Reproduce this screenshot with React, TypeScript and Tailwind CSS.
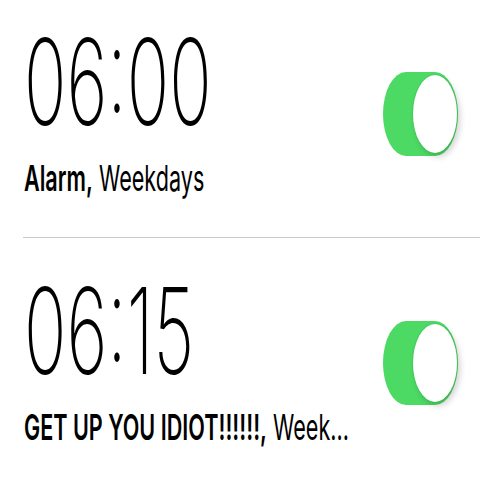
import React from "react"

type alarm = {
    time: string,
    label: string,
    repeat: string,
}

const alarms: alarm[] = [
    { time: "06:00", label: "Alarm,", repeat: "Weekdays" },
    { time: "06:15", label: "GET UP YOU IDIOT!!!!!!,", repeat: "Week..." },
]

function Toggle() {
    return <div className="relative w-[75px] h-[84px] mt-[10px] rounded-[23px/42px] bg-[#4cd964] shrink-0">
        <div className="absolute right-[1px] top-[3px] w-[44px] h-[78px] rounded-[50%] bg-white shadow-[3px_4px_6px_rgba(0,0,0,0.18)] ring-1 ring-[#3fbf55]/40" />
    </div>
}

export default function App() {
    const rows = alarms.map(({ time, label, repeat }, i) => {
        return <div key={time} className="flex flex-col">
            {i > 0 && <div className="ml-[23px] h-px bg-[#c8c7cc]" />}
            <div className={i > 0 ? "flex items-center pt-[33px] pb-[41px] pl-[24px] pr-[22px]" : "flex items-center pt-[22px] pb-[41px] pl-[24px] pr-[22px]"}>
                <div className="flex-1 min-w-0 flex flex-col">
                    <div className="origin-left scale-x-[0.585] text-[120px] leading-none font-extralight text-black whitespace-nowrap" style={{ fontFamily: "Inter, sans-serif" }}>
                        {time}
                    </div>
                    <div className="origin-left scale-x-[0.6] text-[36px] leading-none text-black whitespace-nowrap mt-[18px]" style={{ fontFamily: "Inter, sans-serif" }}>
                        <span className="font-semibold">{label}</span> {repeat}
                    </div>
                </div>
                <Toggle />
            </div>
        </div>
    })

    return <div className="w-[480px] h-[480px] bg-white overflow-hidden">
        {rows}
    </div>
}
